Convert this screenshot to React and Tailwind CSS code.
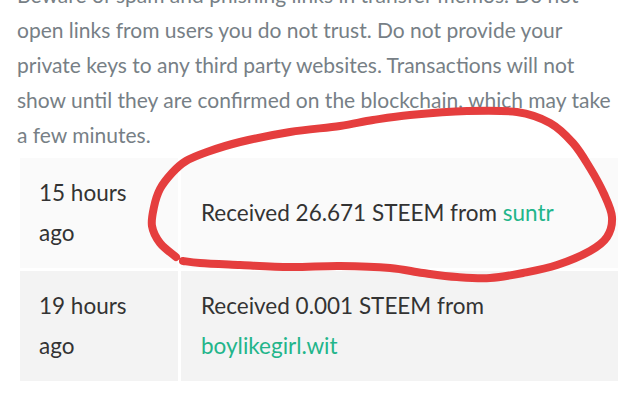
const transfers = [
  { when: '15 hours ago', amount: '26.671', from: 'suntr', bg: 'bg-[#fafafa]' },
  { when: '19 hours ago', amount: '0.001', from: 'boylikegirl.wit', bg: 'bg-[#f3f3f3]' },
];

// hand-drawn circle around the first transfer
const scribble = [
  [176, 257], [160, 243], [152, 226], [154, 207], [160, 189], [172, 173], [186, 161],
  [207, 152], [240, 142], [290, 132], [340, 126], [373, 120], [410, 115], [467, 111],
  [517, 112], [550, 123], [573, 143], [590, 168], [604, 194], [612, 217], [607, 237],
  [590, 251], [557, 265], [523, 273], [490, 278], [457, 277], [423, 273], [390, 268],
  [340, 266], [290, 267], [240, 265], [200, 263], [183, 261],
];

function smoothPath(pts) {
  let d = `M${pts[0][0]},${pts[0][1]}`;
  for (let i = 0; i < pts.length - 1; i++) {
    const p0 = pts[i - 1] || pts[i];
    const p1 = pts[i];
    const p2 = pts[i + 1];
    const p3 = pts[i + 2] || p2;
    const c1x = p1[0] + (p2[0] - p0[0]) / 6;
    const c1y = p1[1] + (p2[1] - p0[1]) / 6;
    const c2x = p2[0] - (p3[0] - p1[0]) / 6;
    const c2y = p2[1] - (p3[1] - p1[1]) / 6;
    d += ` C${c1x.toFixed(1)},${c1y.toFixed(1)} ${c2x.toFixed(1)},${c2y.toFixed(1)} ${p2[0]},${p2[1]}`;
  }
  return d;
}

export default function App() {
  return (
    <div className="relative w-[640px] h-[409px] overflow-hidden bg-white px-[17px] font-['Lato','Noto_Sans',sans-serif]">
      <p className="-mt-[23px] text-[21px] leading-[35px] text-[#777f86]">
        Beware of spam and phishing links in transfer memos. Do not open links from users you do not
        trust. Do not provide your private keys to any third party websites. Transactions will not show
        until they are confirmed on the blockchain, which may take a few minutes.
      </p>

      <table className="mt-[3px] w-[604px] border-separate border-spacing-[3px] text-[22.5px] leading-[40px] text-[#333]">
        <tbody>
          {transfers.map((t) => (
            <tr key={t.when}>
              <td className={`w-[158px] h-[110px] pl-[19px] pr-[22px] ${t.bg}`}>{t.when}</td>
              <td className={`h-[110px] pl-[20px] pr-[20px] ${t.bg}`}>
                Received {t.amount} STEEM from <span className="text-[#22b58a]">{t.from}</span>
              </td>
            </tr>
          ))}
        </tbody>
      </table>

      <svg className="pointer-events-none absolute inset-0" width="640" height="409" viewBox="0 0 640 409">
        <path
          d={smoothPath(scribble)}
          fill="none"
          stroke="#e53e3e"
          strokeWidth="8"
          strokeLinecap="round"
          strokeLinejoin="round"
        />
      </svg>
    </div>
  );
}
